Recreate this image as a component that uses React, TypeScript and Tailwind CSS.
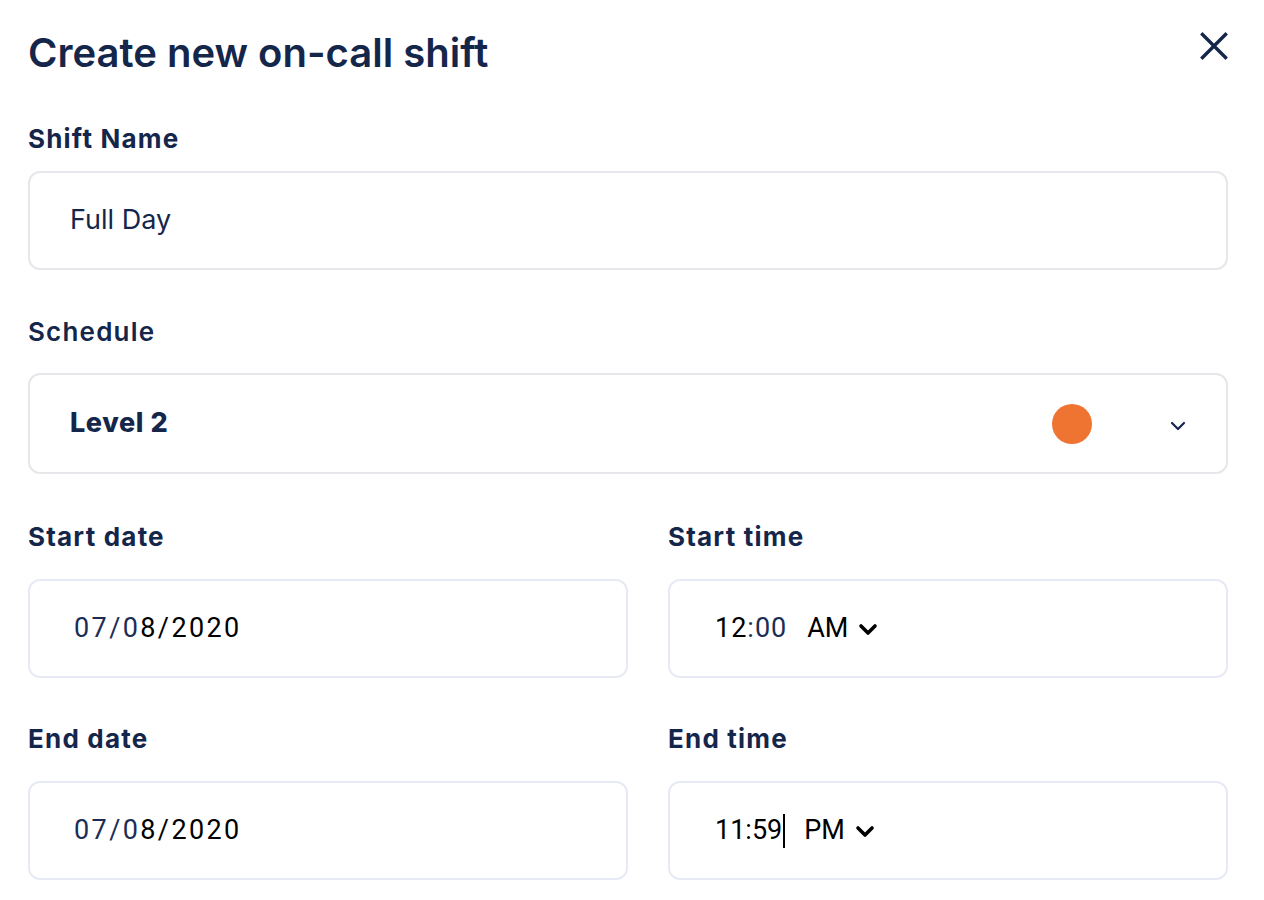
import React from 'react'

function CloseIcon() {
  return (
    <svg width="28" height="28" viewBox="0 0 28 28" fill="none" stroke="currentColor" strokeWidth="3.4" strokeLinecap="square">
      <path d="M2.5 2.5L25.5 25.5M25.5 2.5L2.5 25.5" />
    </svg>
  )
}

function SmallChevron() {
  return (
    <svg width="16" height="10" viewBox="0 0 16 10" fill="none" stroke="currentColor" strokeWidth="2.2" strokeLinecap="round" strokeLinejoin="round">
      <path d="M2 2L8 8L14 2" />
    </svg>
  )
}

function BoldChevron() {
  return (
    <svg width="20" height="13" viewBox="0 0 20 13" fill="none" stroke="black" strokeWidth="3.6" strokeLinecap="round" strokeLinejoin="round">
      <path d="M3 3L10 10L17 3" />
    </svg>
  )
}

function Label({ children, className = 'font-bold' }: { children: React.ReactNode; className?: string }) {
  return <div className={`text-[26px] leading-[32px] tracking-[1.2px] ${className}`}>{children}</div>
}

function DateValue() {
  return (
    <span className="font-['Roboto',sans-serif] text-[27px] tracking-[2.4px]">
      <span className="text-[#1c2d55]">07/0</span>
      <span className="text-black">8/2020</span>
    </span>
  )
}

export default function App() {
  return (
    <div className="min-h-screen bg-white pl-[28px] pr-[36px] pt-[29px] pb-8 font-['Inter',sans-serif] text-[#15264b]">
      <div className="flex items-start justify-between">
        <h1 className="text-[40px] leading-[48px] font-semibold">Create new on-call shift</h1>
        <button className="mt-[3px]">
          <CloseIcon />
        </button>
      </div>

      <Label className="mt-[46px] font-bold">Shift Name</Label>
      <div className="mt-[16px] flex h-[99px] items-center rounded-[12px] border-2 border-[#e6e6eb] pl-[40px]">
        <span className="text-[27px] font-normal">Full Day</span>
      </div>

      <Label className="mt-[46px] font-semibold">Schedule</Label>
      <div className="mt-[25px] flex h-[101px] items-center rounded-[12px] border-2 border-[#e6e6eb] pl-[40px] pr-[40px]">
        <span className="flex-1 text-[27px] tracking-[0.6px] font-extrabold">Level 2</span>
        <span className="h-[40px] w-[40px] rounded-full bg-[#ef7432]" />
        <span className="ml-[78px] mt-[4px] flex">
          <SmallChevron />
        </span>
      </div>

      <div className="mt-[47px] grid grid-cols-[600px_560px] gap-x-[40px]">
        <div>
          <Label>Start date</Label>
          <div className="mt-[26px] flex h-[99px] items-center rounded-[12px] border-2 border-[#e7eaf4] pl-[44px]">
            <DateValue />
          </div>
        </div>
        <div>
          <Label>Start time</Label>
          <div className="mt-[26px] flex h-[99px] items-center rounded-[12px] border-2 border-[#e7eaf4] pl-[45px] font-['Roboto',sans-serif] text-[27px]">
            <span className="tracking-[1px] text-black">12</span>
            <span className="tracking-[1px] text-[#1c2d55]">:00</span>
            <span className="ml-[20px] text-black">AM</span>
            <span className="ml-[10px] mt-[2px] flex">
              <BoldChevron />
            </span>
          </div>
        </div>
      </div>

      <div className="mt-[45px] grid grid-cols-[600px_560px] gap-x-[40px]">
        <div>
          <Label>End date</Label>
          <div className="mt-[26px] flex h-[99px] items-center rounded-[12px] border-2 border-[#e7eaf4] pl-[44px]">
            <DateValue />
          </div>
        </div>
        <div>
          <Label>End time</Label>
          <div className="mt-[26px] flex h-[99px] items-center rounded-[12px] border-2 border-[#e7eaf4] pl-[45px] font-['Roboto',sans-serif] text-[27px] text-black">
            <span>11:59</span>
            <span className="ml-[1px] h-[34px] w-[2px] bg-black" />
            <span className="ml-[19px]">PM</span>
            <span className="ml-[10px] mt-[2px] flex">
              <BoldChevron />
            </span>
          </div>
        </div>
      </div>
    </div>
  )
}
